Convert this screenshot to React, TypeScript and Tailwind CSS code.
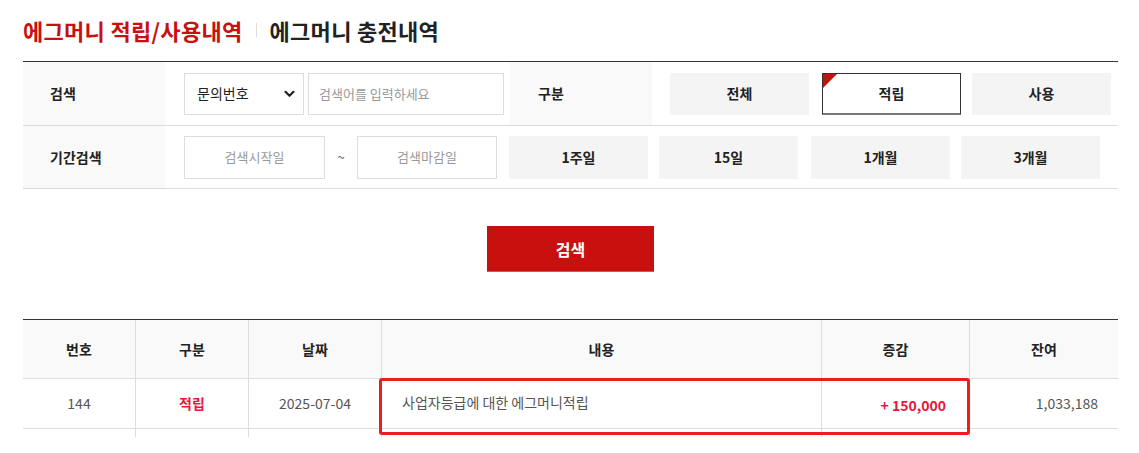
import React from "react";

const font = { fontFamily: '"Noto Sans CJK KR", "Noto Sans", sans-serif' };

function Chevron() {
  return (
    <svg width="11" height="8" viewBox="0 0 11 8" className="block">
      <path d="M1.5 1.8 L5.5 5.8 L9.5 1.8" fill="none" stroke="#222" strokeWidth="2.2" strokeLinecap="round" strokeLinejoin="round" />
    </svg>
  );
}

function FBtn({ label, active }: { label: string; active?: boolean }) {
  if (active) {
    return (
      <div className="relative w-[139px] h-[42px] bg-white border border-[#333] border-b-2 border-b-[#777] flex items-center justify-center text-[14px] font-bold text-[#222]">
        <span className="absolute left-0 top-0 w-0 h-0 border-t-[14px] border-t-[#c8100f] border-r-[14px] border-r-transparent" />
        {label}
      </div>
    );
  }
  return (
    <div className="w-[139px] h-[42px] bg-[#f4f4f4] flex items-center justify-center text-[14px] font-bold text-[#222]">
      {label}
    </div>
  );
}

export default function App() {
  return (
    <div className="w-[1139px] h-[453px] bg-white overflow-hidden" style={font}>
      <div className="ml-[23px] w-[1095px]">
        {/* Title */}
        <div className="h-[61px] pt-[14px] flex items-start">
          <div className="flex items-center h-[32px]">
            <span className="text-[22px] font-bold text-[#c8100f] tracking-[0.3px]">에그머니 적립/사용내역</span>
            <span className="mx-[13px] w-px h-[14px] bg-[#ddd]" />
            <span className="text-[22px] font-bold text-[#222] tracking-[0.3px]">에그머니 충전내역</span>
          </div>
        </div>

        {/* Filter */}
        <div className="border-t border-[#333]">
          <div className="flex h-[64px] border-b border-[#ddd]">
            <div className="w-[142px] bg-[#f9f9f9] flex items-center pl-[27px] text-[14px] font-bold text-[#222]">검색</div>
            <div className="w-[345px] flex items-center pl-[19px] gap-[4px]">
              <div className="w-[120px] h-[42px] border border-[#ddd] flex items-center justify-between pl-[12px] pr-[8px] text-[14px] text-[#222]">
                <span>문의번호</span>
                <Chevron />
              </div>
              <div className="w-[196px] h-[42px] border border-[#ddd] flex items-center pl-[10px] text-[13px] text-[#999]">검색어를 입력하세요</div>
            </div>
            <div className="w-[142px] bg-[#f9f9f9] flex items-center pl-[28px] text-[14px] font-bold text-[#222]">구분</div>
            <div className="flex items-center pl-[18px] gap-[13px]">
              <FBtn label="전체" />
              <div className="flex gap-[11px]">
                <FBtn label="적립" active />
                <FBtn label="사용" />
              </div>
            </div>
          </div>
          <div className="flex h-[63px] border-b border-[#ddd]">
            <div className="w-[142px] bg-[#f9f9f9] flex items-center pl-[27px] text-[14px] font-bold text-[#222]">기간검색</div>
            <div className="flex items-center pl-[19px]">
              <div className="w-[141px] h-[43px] border border-[#ddd] flex items-center justify-center text-[13px] text-[#999]">검색시작일</div>
              <div className="w-[32px] text-center text-[13px] text-[#666]">~</div>
              <div className="w-[140px] h-[43px] border border-[#ddd] flex items-center justify-center text-[13px] text-[#999]">검색마감일</div>
              <div className="flex ml-[12px]">
                <div className="w-[139px] h-[43px] bg-[#f4f4f4] flex items-center justify-center text-[14px] font-bold text-[#222]">1주일</div>
                <div className="ml-[11px] w-[139px] h-[43px] bg-[#f4f4f4] flex items-center justify-center text-[14px] font-bold text-[#222]">15일</div>
                <div className="ml-[13px] w-[139px] h-[43px] bg-[#f4f4f4] flex items-center justify-center text-[14px] font-bold text-[#222]">1개월</div>
                <div className="ml-[11px] w-[139px] h-[43px] bg-[#f4f4f4] flex items-center justify-center text-[14px] font-bold text-[#222]">3개월</div>
              </div>
            </div>
          </div>
        </div>

        {/* Search button */}
        <div className="flex justify-center pt-[37px] pb-[47px]">
          <div className="w-[167px] h-[46px] bg-[#c8100f] border-b border-b-[#e05050] flex items-center justify-center text-white text-[16px] font-bold">검색</div>
        </div>

        {/* Result table */}
        <div className="relative border-t border-[#333]">
          <div className="grid grid-cols-[112px_113px_133px_440px_148px_149px] h-[59px] bg-[#f9f9f9] border-b border-[#ddd] text-[14px] font-semibold text-[#222]">
            <div className="flex items-center justify-center">번호</div>
            <div className="flex items-center justify-center border-l border-[#ddd]">구분</div>
            <div className="flex items-center justify-center border-l border-[#ddd]">날짜</div>
            <div className="flex items-center justify-center border-l border-[#ddd]">내용</div>
            <div className="flex items-center justify-center border-l border-[#ddd]">증감</div>
            <div className="flex items-center justify-center border-l border-[#ddd]">잔여</div>
          </div>
          <div className="grid grid-cols-[112px_113px_133px_440px_148px_149px] h-[50px] border-b border-[#ddd] text-[14px] text-[#555]">
            <div className="flex items-center justify-center">144</div>
            <div className="flex items-center justify-center border-l border-[#ddd] font-bold text-[#e8173d]">적립</div>
            <div className="flex items-center justify-center border-l border-[#ddd]">2025-07-04</div>
            <div className="flex items-center pl-[20px] pb-[2px] border-l border-[#ddd]">사업자등급에 대한 에그머니적립</div>
            <div className="flex items-center justify-end pr-[23px] pt-[4px] border-l border-[#ddd] font-bold text-[#e8173d]">+ 150,000</div>
            <div className="flex items-center justify-end pr-[20px] border-l border-[#ddd]">1,033,188</div>
          </div>
          <div className="grid grid-cols-[112px_113px_133px_440px_148px_149px] h-[8px]">
            <div />
            <div className="border-l border-[#ddd]" />
            <div className="border-l border-[#ddd]" />
            <div className="border-l border-[#ddd]" />
            <div className="border-l border-[#ddd]" />
            <div className="border-l border-[#ddd]" />
          </div>
          <div className="absolute left-[356px] top-[58px] w-[591px] h-[57px] border-[3px] border-[#ee1c1c] rounded-[3px]" />
        </div>
      </div>
    </div>
  );
}
